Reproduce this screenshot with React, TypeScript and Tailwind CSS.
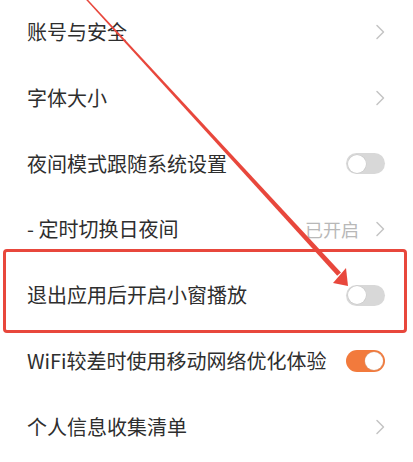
import React from "react";

const Chevron = () => (
  <svg width="10" height="16" viewBox="0 0 10 16" className="block">
    <polyline points="2,1.5 8.5,8 2,14.5" fill="none" stroke="#c4c4c4" strokeWidth="1.5" strokeLinecap="round" strokeLinejoin="round" />
  </svg>
);

const ToggleOff = () => (
  <div className="w-[39px] h-[21px] rounded-full bg-[#d8d8d8] flex items-center p-[1.5px]">
    <div className="w-[18px] h-[18px] rounded-full bg-white shadow-[0_0_0_0.5px_#c8c8c8]" />
  </div>
);

const ToggleOn = () => (
  <div className="w-[39px] h-[22px] rounded-full bg-[#f27a3c] flex items-center justify-end p-[2px]">
    <div className="w-[18px] h-[18px] rounded-full bg-white shadow-[0_0_0_0.5px_#d8a080]" />
  </div>
);

type Row = { label: string; right: React.ReactNode };

const rows: Row[] = [
  { label: "账号与安全", right: <Chevron /> },
  { label: "字体大小", right: <Chevron /> },
  { label: "夜间模式跟随系统设置", right: <ToggleOff /> },
  {
    label: "- 定时切换日夜间",
    right: (
      <div className="flex items-center gap-[16px]">
        <span className="text-[18px] text-[#b8b8b8] leading-none">已开启</span>
        <Chevron />
      </div>
    ),
  },
  { label: "退出应用后开启小窗播放", right: <ToggleOff /> },
  { label: "WiFi较差时使用移动网络优化体验", right: <ToggleOn /> },
  { label: "个人信息收集清单", right: <Chevron /> },
];

export default function App() {
  return (
    <div
      className="relative w-[413px] h-[462px] overflow-hidden bg-white"
      style={{ fontFamily: '"Noto Sans CJK SC", "Noto Sans", sans-serif' }}
    >
      <div className="-mt-px flex flex-col">
        {rows.map((r, i) => (
          <div key={i} className="h-[65.85px] flex items-center justify-between pl-[27px] pr-[28px]">
            <span className="text-[20px] text-[#2e2e2e] leading-none">{r.label}</span>
            <div className="flex items-center">{r.right}</div>
          </div>
        ))}
      </div>

      {/* annotation box */}
      <div className="absolute left-[3px] top-[249px] w-[404px] h-[84px] border-[3.5px] border-[#e8473c] rounded-[4px] pointer-events-none" />

      {/* annotation arrow */}
      <svg className="absolute left-0 top-0 pointer-events-none" width="413" height="462" viewBox="0 0 413 462">
        <polygon points="86.2,0 88.2,0 341,272.5 337.2,275.8" fill="#e8473c" />
        <polygon points="348,286 333,283 346,268" fill="#e8473c" />
      </svg>
    </div>
  );
}
